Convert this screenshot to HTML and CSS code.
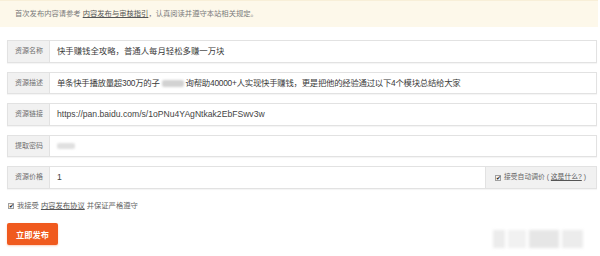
FILE: index.html
```html
<!DOCTYPE html>
<html lang="zh">
<head>
<meta charset="utf-8">
<link rel="stylesheet" href="styles.css">
</head>
<body>
<div class="page">
  <div class="notice">首次发布内容请参考 <a class="link">内容发布与审核指引</a>，认真阅读并遵守本站相关规定。</div>
  <div class="form">
    <div class="row">
      <span class="label">资源名称</span>
      <div class="field">快手赚钱全攻略，普通人每月轻松多赚一万块</div>
    </div>
    <div class="row">
      <span class="label">资源描述</span>
      <div class="field tight">单条快手播放量超300万的子<span class="blur wide"></span>询帮助40000+人实现快手赚钱，更是把他的经验通过以下4个模块总结给大家</div>
    </div>
    <div class="row">
      <span class="label">资源链接</span>
      <div class="field latin">https://pan.baidu.com/s/1oPNu4YAgNtkak2EbFSwv3w</div>
    </div>
    <div class="row">
      <span class="label">提取密码</span>
      <div class="field"><span class="blur code"></span></div>
    </div>
    <div class="row">
      <span class="label">资源价格</span>
      <div class="field latin">1</div>
      <div class="addon"><span class="check">✔</span>接受自动调价 ( <a class="link">这是什么?</a> )</div>
    </div>
  </div>
  <div class="agree"><span class="check">✔</span>我接受 <a class="link">内容发布协议</a> 并保证严格遵守</div>
  <div class="footer">
    <button class="submit">立即发布</button>
    <div class="watermark">
      <span class="wm a"></span><span class="wm b"></span><span class="wm c"></span><span class="wm d"></span>
    </div>
  </div>
</div>
</body>
</html>
```

FILE: styles.css
```css
html, body {
  margin: 0;
  padding: 0;
  background: #ffffff;
}
body {
  font-family: "Liberation Sans", "Noto Sans CJK SC", sans-serif;
  color: #333;
}
.page {
  width: 600px;
  height: 256px;
  overflow: hidden;
}
.notice {
  width: 598px;
  height: 27px;
  box-sizing: border-box;
  background: #fdf8ea;
  border-top: 1px solid #f8efd8;
  padding-left: 15px;
  font-size: 7.3px;
  line-height: 26px;
  color: #7a7a7a;
}
.link {
  color: #555;
  text-decoration: underline;
}
.form {
  margin-top: 13px;
  margin-left: 7px;
  width: 590px;
  display: flex;
  flex-direction: column;
  gap: 9px;
}
.row {
  display: flex;
  height: 22.5px;
  box-sizing: border-box;
  border: 1px solid #e2e2e2;
  box-shadow: 0 1px 1px rgba(0,0,0,0.04);
  background: #fff;
}
.label {
  width: 42px;
  flex: none;
  box-sizing: border-box;
  background: #f1f1f1;
  border-right: 1px solid #e2e2e2;
  padding-left: 7px;
  font-size: 7px;
  line-height: 20.5px;
  color: #707070;
}
.field {
  flex: 1;
  padding-left: 7px;
  font-size: 8.4px;
  line-height: 20.5px;
  color: #3a3a3a;
  white-space: nowrap;
  overflow: hidden;
}
.field.tight {
  letter-spacing: -0.25px;
}
.latin {
  font-size: 8.6px;
  color: #444;
}
.blur {
  display: inline-block;
  vertical-align: middle;
  background: #d6d6d6;
  filter: blur(1.2px);
  border-radius: 2px;
}
.blur.wide {
  width: 22px;
  height: 7px;
  margin: 0 2px;
  background: #d2d2d2;
}
.blur.code {
  width: 18px;
  height: 6px;
  background: #e0e0e0;
}
.addon {
  flex: none;
  width: 111px;
  box-sizing: border-box;
  background: #f1f1f1;
  border-left: 1px solid #e2e2e2;
  padding-left: 9px;
  font-size: 6.8px;
  line-height: 20.5px;
  color: #666;
  white-space: nowrap;
}
.check {
  display: inline-block;
  width: 6px;
  height: 6px;
  box-sizing: border-box;
  border: 1px solid #a0a0a0;
  background: #f4f4f4;
  font-size: 6px;
  line-height: 4px;
  text-indent: -0.5px;
  color: #222;
  margin-right: 3px;
  vertical-align: -0.5px;
  overflow: visible;
}
.agree {
  margin-top: 12px;
  padding-left: 8px;
  font-size: 7.3px;
  line-height: 9px;
  color: #666;
}
.footer {
  margin-top: 13px;
  display: flex;
  justify-content: space-between;
  align-items: flex-start;
  padding-left: 7px;
  padding-right: 17px;
}
.submit {
  width: 51px;
  height: 22px;
  border: none;
  border-radius: 2px;
  background: #f05a1e;
  color: #fff;
  font-family: "Noto Sans CJK SC", sans-serif;
  font-weight: bold;
  font-size: 8.2px;
  padding: 0;
  box-shadow: 0 1px 2px rgba(240,90,30,0.3);
}
.watermark {
  margin-top: 7px;
  width: 90px;
  height: 18px;
  display: flex;
  gap: 3px;
  filter: blur(1.8px);
}
.wm {
  display: block;
  height: 100%;
}
.wm.a { width: 12px; background: #ececec; }
.wm.b { width: 18px; background: #f1f1f1; }
.wm.c { width: 30px; background: #e6e6e6; }
.wm.d { width: 21px; background: #ececec; }
```
